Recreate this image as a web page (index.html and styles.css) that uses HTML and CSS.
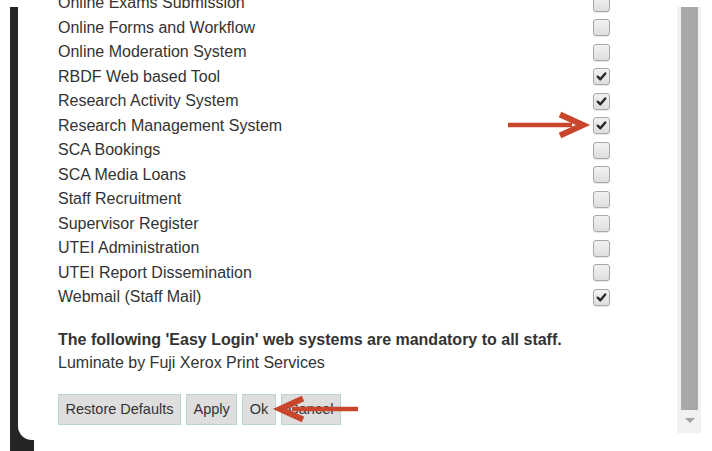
FILE: index.html
```html
<!DOCTYPE html>
<html lang="en">
<head>
<meta charset="utf-8">
<title>Easy Login Preferences</title>
<link rel="stylesheet" href="styles.css">
</head>
<body>
<div class="screen">
  <div class="edge"></div>
  <div class="dialog">
    <div class="content">
      <ul class="systems">
        <li><span>Online Exams Submission</span><span class="box"></span></li>
        <li><span>Online Forms and Workflow</span><span class="box"></span></li>
        <li><span>Online Moderation System</span><span class="box"></span></li>
        <li><span>RBDF Web based Tool</span><span class="box on"><svg viewBox="0 0 16 16"><path d="M4 8.2 L6.8 11 L12 4.8" /></svg></span></li>
        <li><span>Research Activity System</span><span class="box on"><svg viewBox="0 0 16 16"><path d="M4 8.2 L6.8 11 L12 4.8" /></svg></span></li>
        <li><span>Research Management System</span><span class="box on"><svg viewBox="0 0 16 16"><path d="M4 8.2 L6.8 11 L12 4.8" /></svg></span></li>
        <li><span>SCA Bookings</span><span class="box"></span></li>
        <li><span>SCA Media Loans</span><span class="box"></span></li>
        <li><span>Staff Recruitment</span><span class="box"></span></li>
        <li><span>Supervisor Register</span><span class="box"></span></li>
        <li><span>UTEI Administration</span><span class="box"></span></li>
        <li><span>UTEI Report Dissemination</span><span class="box"></span></li>
        <li><span>Webmail (Staff Mail)</span><span class="box on"><svg viewBox="0 0 16 16"><path d="M4 8.2 L6.8 11 L12 4.8" /></svg></span></li>
      </ul>
      <p class="notice">The following 'Easy Login' web systems are mandatory to all staff.</p>
      <p class="mandatory">Luminate by Fuji Xerox Print Services</p>
      <div class="actions">
        <button class="btn">Restore Defaults</button>
        <button class="btn">Apply</button>
        <button class="btn">Ok</button>
        <button class="btn">Cancel</button>
      </div>
    </div>
    <div class="scrollbar">
      <div class="thumb"></div>
      <div class="arrow"></div>
    </div>
    <!-- callout arrows -->
    <svg class="callout callout-right" viewBox="0 0 80 26">
      <path d="M0 13 H64" />
      <path d="M52 2.5 L75 13 L52 23.5" class="head" />
    </svg>
    <svg class="callout callout-left" viewBox="0 0 82 26">
      <path d="M16 13 H82" />
      <path d="M27 2.5 L4 13 L27 23.5" class="head" />
    </svg>
  </div>
</div>
</body>
</html>
```
FILE: styles.css
```css
html, body {
  margin: 0;
  padding: 0;
  background: #ffffff;
}

body {
  width: 712px;
  height: 451px;
  overflow: hidden;
  font-family: "Liberation Sans", Arial, sans-serif;
  font-size: 16px;
  color: #333333;
}

.screen {
  position: relative;
  display: flex;
  height: 451px;
  padding-left: 10px;
}

/* dark window frame peeking round the bottom-left corner */
.screen::after {
  content: "";
  position: absolute;
  left: 10px;
  top: 424px;
  width: 24px;
  height: 27px;
  background: #252525;
  z-index: 0;
}

.edge {
  width: 8px;
  margin-top: 7px;
  background: #252525;
  z-index: 1;
}

.dialog {
  position: relative;
  z-index: 1;
  flex: 1;
  display: flex;
  height: 440px;
  background: #ffffff;
  border-bottom-left-radius: 14px;
  overflow: hidden;
}

.content {
  width: 619px;
  padding-left: 40px;
}

.systems {
  list-style: none;
  margin: -9px 0 0 0;
  padding: 0;
  width: 552px;
}

.systems li {
  display: flex;
  align-items: center;
  justify-content: space-between;
  height: 24.5px;
}

.box {
  width: 15px;
  height: 15px;
  border: 1px solid #a8a8a8;
  border-radius: 3px;
  background: linear-gradient(#f2f2f2, #dedede);
  box-shadow: 0 1px 1px rgba(0, 0, 0, 0.1);
}

.box svg {
  display: block;
  width: 15px;
  height: 15px;
}

.box svg path {
  fill: none;
  stroke: #2a2a2a;
  stroke-width: 2.6;
  stroke-linecap: round;
  stroke-linejoin: round;
}

.notice {
  margin: 20px 0 0 0;
  line-height: 20px;
  font-weight: bold;
}

.mandatory {
  margin: 3px 0 0 0;
  line-height: 20px;
}

.actions {
  display: flex;
  gap: 5px;
  margin-top: 21px;
}

.btn {
  height: 31px;
  padding: 0 6.5px;
  font-family: "Liberation Sans", Arial, sans-serif;
  font-size: 14.5px;
  color: #333333;
  background: #dedede;
  border: 1px solid #b9d6d4;
  border-radius: 0;
}

.scrollbar {
  position: relative;
  width: 24px;
  margin-top: 7px;
  height: 426px;
  background: #f1f1f1;
}

.thumb {
  margin: 0 3px 0 4px;
  height: 403px;
  background: #a8a8a8;
}

.arrow {
  position: absolute;
  left: 8px;
  top: 411px;
  width: 0;
  height: 0;
  border-left: 5px solid transparent;
  border-right: 5px solid transparent;
  border-top: 5px solid #a3a3a3;
}

.callout {
  position: absolute;
  overflow: visible;
}

.callout path {
  fill: none;
  stroke: #c8472c;
  stroke-width: 4.5;
  stroke-linecap: butt;
}

.callout path.head {
  stroke-width: 6;
  stroke-linejoin: miter;
}

.callout-right {
  left: 490px;
  top: 112px;
  width: 80px;
  height: 26px;
}

.callout-left {
  left: 258px;
  top: 396px;
  width: 82px;
  height: 26px;
}
```
